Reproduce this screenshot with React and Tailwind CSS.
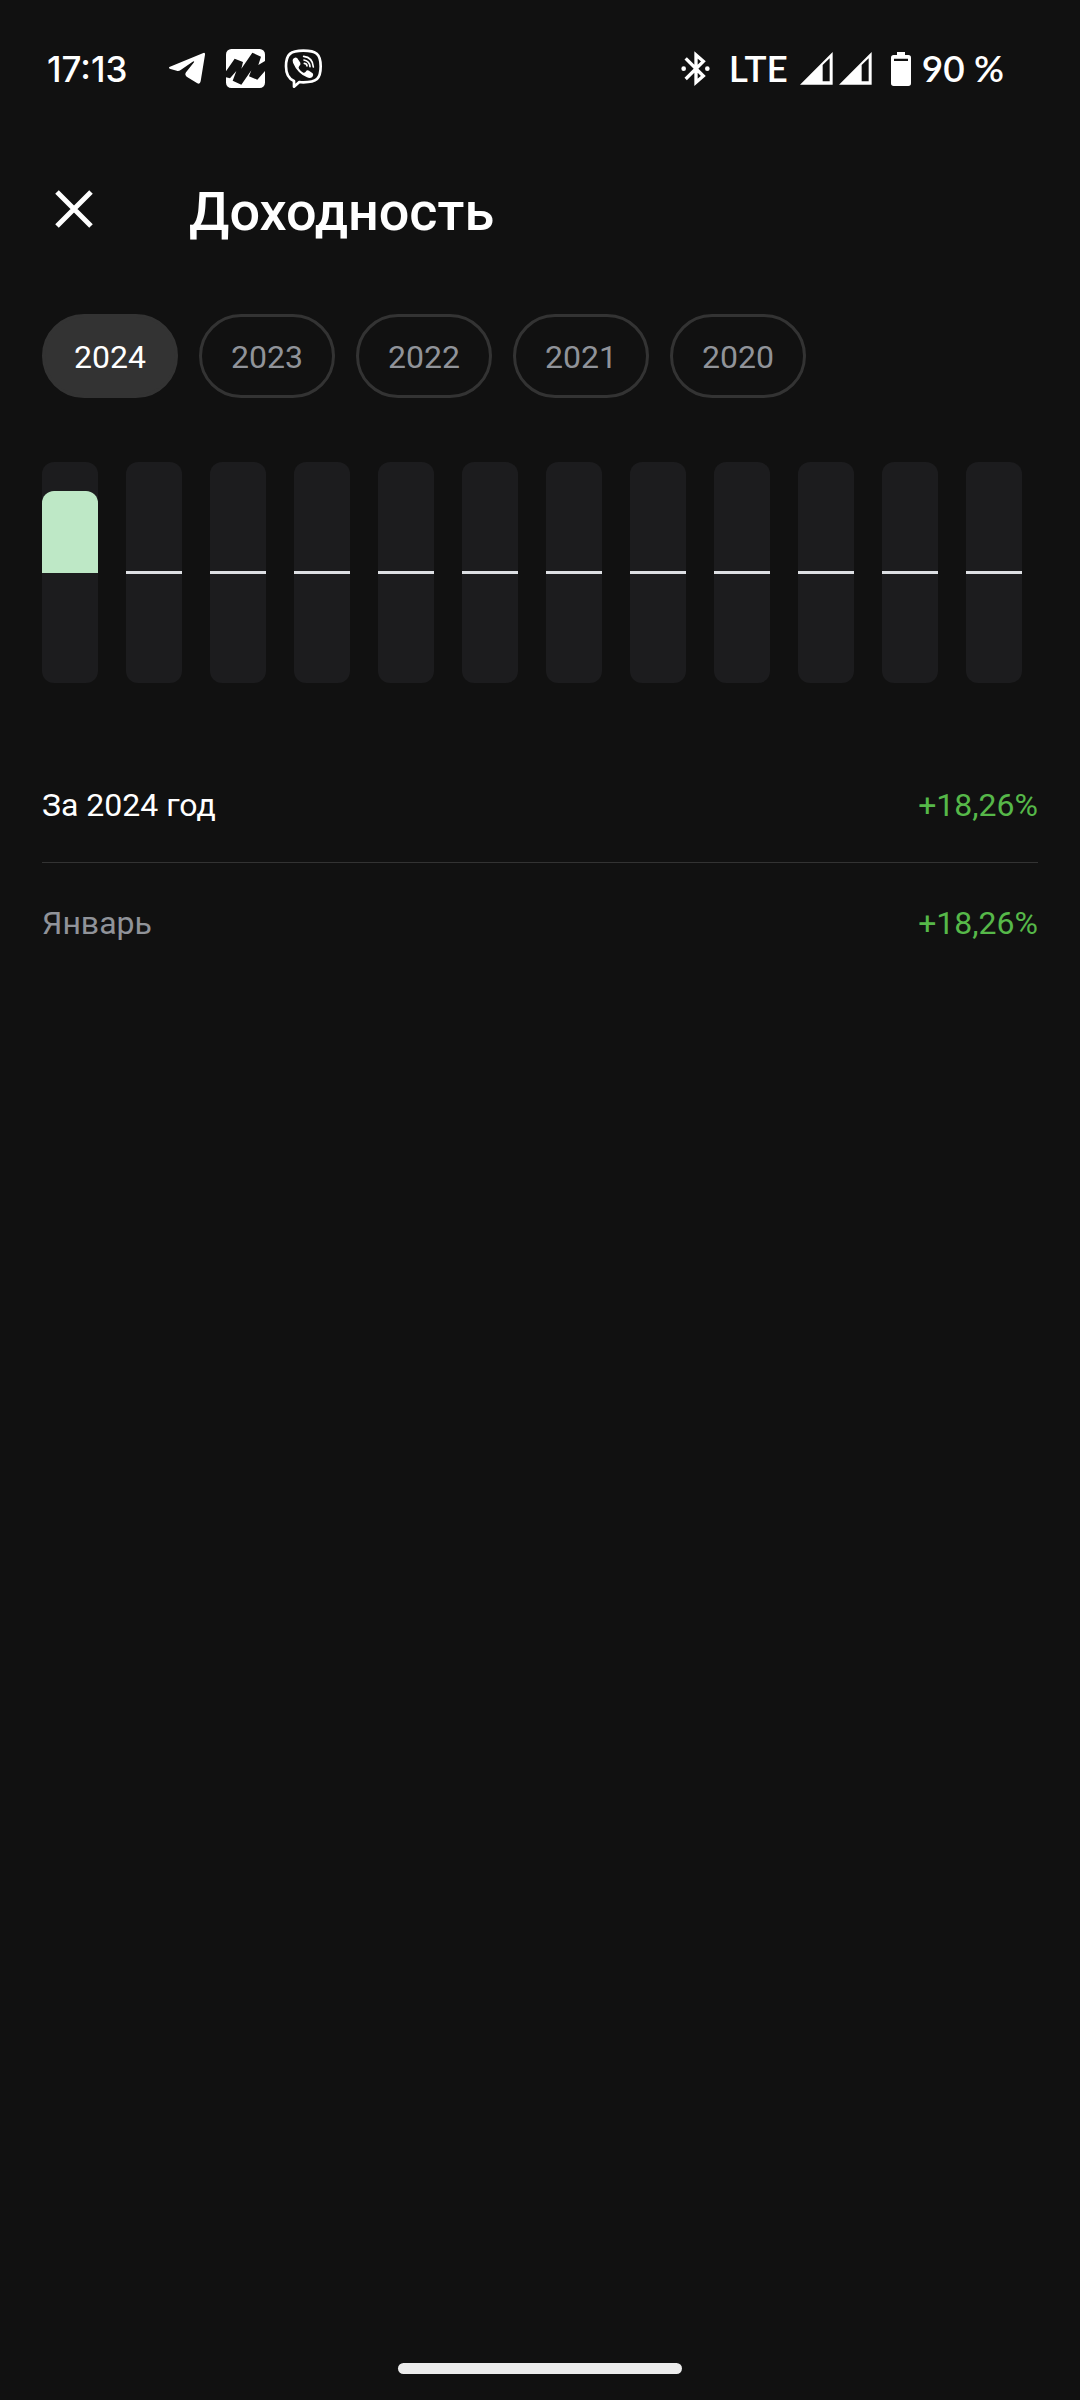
import React, { useState } from 'react';

const YEARS = [2024, 2023, 2022, 2021, 2020];

const MONTHS = [
  'Январь',
  'Февраль',
  'Март',
  'Апрель',
  'Май',
  'Июнь',
  'Июль',
  'Август',
  'Сентябрь',
  'Октябрь',
  'Ноябрь',
  'Декабрь',
];

// Monthly yield in percent, by year
const YIELDS = {
  2024: [18.26],
};

// Value that fills a half of the column
const SCALE_MAX = 24.8;

const formatYield = (value) =>
  `${value < 0 ? '−' : '+'}${Math.abs(value).toFixed(2).replace('.', ',')}%`;

export default function App() {
  const [year, setYear] = useState(2024);
  const values = YIELDS[year] || [];
  const total = (values.reduce((acc, v) => acc * (1 + v / 100), 1) - 1) * 100;

  return (
    <div className="min-h-screen flex flex-col bg-[#111111] text-white font-['Roboto',sans-serif]">
      <StatusBar />

      <header className="flex items-center gap-[83px] h-[144px] px-[42px]">
        <button aria-label="Закрыть" className="w-[64px] h-[64px] flex items-center justify-center">
          <CloseIcon />
        </button>
        <h1 className="pt-[6px] text-[54px] leading-[64px] font-medium">Доходность</h1>
      </header>

      <main className="px-[42px] pt-[33px]">
        <div className="flex gap-[21px]">
          {YEARS.map((item) => (
            <YearChip key={item} year={item} active={item === year} onClick={() => setYear(item)} />
          ))}
        </div>

        <div className="flex gap-[28px] mt-[64px]">
          {MONTHS.map((month, idx) => (
            <MonthColumn key={month} value={values[idx]} />
          ))}
        </div>

        <table className="w-full mt-[62px] text-[32px] leading-[40px]">
          <tbody>
            <tr className="h-[117px] border-b border-[#333333]">
              <th scope="row" className="pt-[4px] text-left font-normal">
                За {year} год
              </th>
              <td className="pt-[4px] text-right text-[#56b849]">{formatYield(total)}</td>
            </tr>
            {values.map((value, idx) => (
              <tr key={MONTHS[idx]} className="h-[117px]">
                <th scope="row" className="pt-[4px] text-left font-normal text-[#909399]">
                  {MONTHS[idx]}
                </th>
                <td className="pt-[4px] text-right text-[#56b849]">{formatYield(value)}</td>
              </tr>
            ))}
          </tbody>
        </table>
      </main>

      <div className="mt-auto mb-[26px] mx-auto w-[284px] h-[11px] rounded-full bg-[#ececec]" />
    </div>
  );
}

function YearChip({ year, active, onClick }) {
  return (
    <button
      onClick={onClick}
      aria-pressed={active}
      className={`w-[136px] h-[84px] pt-[2px] rounded-full border-3 border-[#333333] text-[32px] leading-[40px] ${
        active ? 'bg-[#333333] text-white' : 'text-[#909399]'
      }`}
    >
      {year}
    </button>
  );
}

function MonthColumn({ value }) {
  const height = value ? `${Math.min(Math.abs(value) / SCALE_MAX, 1) * 100}%` : 0;

  return (
    <div className="w-[56px] h-[221px] flex flex-col rounded-[12px] bg-[#1c1c1e]">
      <div className="flex-1 flex items-end">
        {value > 0 && <div className="w-full rounded-t-[12px] bg-[#bee8c6]" style={{ height }} />}
      </div>
      {!value && <div className="h-[3px] bg-[#dddfe3]" />}
      <div className="flex-1">
        {value < 0 && <div className="w-full rounded-b-[12px] bg-[#f2b8b5]" style={{ height }} />}
      </div>
    </div>
  );
}

function StatusBar() {
  return (
    <div className="flex items-center justify-between h-[137px] pl-[47px] pr-[76px]">
      <div className="flex items-center">
        <span className="text-[35px] leading-[40px] font-medium font-['Inter',sans-serif]">17:13</span>
        <div className="flex items-center gap-[19px] ml-[41px]">
          <TelegramIcon />
          <MarketIcon />
          <ViberIcon />
        </div>
      </div>

      <div className="flex items-center text-[37px] leading-[40px] font-semibold font-['Lato',sans-serif]">
        <BluetoothIcon />
        <span className="ml-[18px] pb-[2px]">LTE</span>
        <div className="flex gap-[6px] ml-[12px]">
          <SignalIcon />
          <SignalIcon />
        </div>
        <BatteryIcon />
        <span className="ml-[11px] pb-[2px]">90 %</span>
      </div>
    </div>
  );
}

function CloseIcon() {
  return (
    <svg width="38" height="38" viewBox="0 0 38 38" fill="none" stroke="currentColor" strokeWidth="5">
      <path d="M2 2L36 36M36 2L2 36" />
    </svg>
  );
}

function TelegramIcon() {
  return (
    <svg width="39" height="33" viewBox="0 0 117 99" fill="currentColor">
      <path d="M4 45L106 3Q112 1 111 8L98 88Q96 98 88 94L56 74Q49 68 54 61L78 31Q80 26 74 29L38 54Q32 58 26 56L5 50Q1 47 4 45Z" />
    </svg>
  );
}

function MarketIcon() {
  return (
    <svg width="39" height="39" viewBox="0 0 117 117">
      <rect width="117" height="117" rx="16" fill="#fff" />
      <path
        d="M0 67L26 29L51 39L46 59L79 11L105 23L97 48L117 36V66L94 92L69 82L76 64L46 107L20 95L31 66L12 88L0 85Z"
        fill="#111111"
      />
    </svg>
  );
}

function ViberIcon() {
  return (
    <svg width="39" height="39" viewBox="0 0 117 117" fill="none" stroke="currentColor" strokeLinecap="round">
      <path
        d="M58 5C20 5 6 15 6 52C6 76 12 89 30 96V113L46 99C50 100 54 100 58 100C98 100 110 90 110 52C110 14 96 5 58 5Z"
        strokeWidth="8"
        strokeLinejoin="round"
      />
      <path
        d="M27 30Q34 22 40 28L49 41Q51 47 46 51Q42 54 45 59Q50 67 58 71Q62 72 65 68Q69 62 75 65L86 73Q90 78 85 84Q78 90 69 85Q40 72 27 41Q25 34 27 30Z"
        fill="currentColor"
        stroke="none"
      />
      <path d="M59 22Q86 25 88 54M60 33Q77 36 78 53M61 43Q69 44 69 51" strokeWidth="5" />
    </svg>
  );
}

function BluetoothIcon() {
  return (
    <svg width="30" height="35" viewBox="0 0 90 105" fill="none" stroke="currentColor" strokeWidth="10">
      <path d="M14 22L67 75L45 94V12L67 31L14 84" />
      <circle cx="8" cy="53" r="7" fill="currentColor" stroke="none" />
      <circle cx="79" cy="53" r="7" fill="currentColor" stroke="none" />
    </svg>
  );
}

function SignalIcon() {
  return (
    <svg width="33" height="33" viewBox="0 0 99 99">
      <path
        d="M0 98L98 0V98ZM68 39V88H89V19Z"
        fill="currentColor"
        fillRule="evenodd"
      />
    </svg>
  );
}

function BatteryIcon() {
  return (
    <svg className="ml-[19px]" width="20" height="34" viewBox="0 0 60 102">
      <path
        d="M18 0H42V9H52Q60 9 60 17V94Q60 102 52 102H8Q0 102 0 94V17Q0 9 8 9H18ZM9 20V27H51V20Z"
        fill="currentColor"
        fillRule="evenodd"
      />
    </svg>
  );
}
